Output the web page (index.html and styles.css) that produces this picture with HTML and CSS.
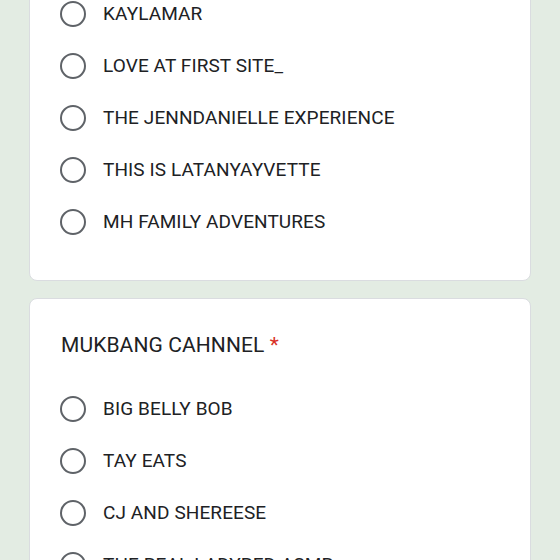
FILE: index.html
```html
<!DOCTYPE html>
<html>
<head>
<meta charset="utf-8">
<link rel="stylesheet" href="styles.css">
</head>
<body>
<div class="page">
  <div class="card card-first">
    <div class="options">
      <div class="option"><span class="radio"></span><span class="label">KAYLAMAR</span></div>
      <div class="option"><span class="radio"></span><span class="label">LOVE AT FIRST SITE_</span></div>
      <div class="option"><span class="radio"></span><span class="label">THE JENNDANIELLE EXPERIENCE</span></div>
      <div class="option"><span class="radio"></span><span class="label">THIS IS LATANYAYVETTE</span></div>
      <div class="option"><span class="radio"></span><span class="label">MH FAMILY ADVENTURES</span></div>
    </div>
  </div>
  <div class="card card-second">
    <div class="title">MUKBANG CAHNNEL <span class="req">*</span></div>
    <div class="options">
      <div class="option"><span class="radio"></span><span class="label">BIG BELLY BOB</span></div>
      <div class="option"><span class="radio"></span><span class="label">TAY EATS</span></div>
      <div class="option"><span class="radio"></span><span class="label">CJ AND SHEREESE</span></div>
      <div class="option"><span class="radio"></span><span class="label">THE REAL LADYRED ASMR</span></div>
    </div>
  </div>
</div>
</body>
</html>
```
FILE: styles.css
```css
html, body {
  margin: 0;
  padding: 0;
  background: #e3ece3;
  overflow: hidden;
}
.page {
  width: 560px;
  height: 560px;
  overflow: hidden;
  padding: 0 29px;
  box-sizing: border-box;
  font-family: Roboto, "Liberation Sans", sans-serif;
  color: #202124;
}
.card {
  background: #fff;
  border: 1px solid #dadce0;
  border-radius: 8px;
  padding-left: 31px;
  padding-right: 24px;
}
.card-first {
  margin-top: -24px;
  padding-top: 25px;
  padding-bottom: 46px;
}
.card-second {
  margin-top: 17px;
  padding-top: 34px;
  padding-bottom: 40px;
}
.title {
  font-size: 21px;
  line-height: 24px;
  letter-spacing: 0.1px;
  margin-bottom: 40px;
}
.req {
  color: #d93025;
}
.options {
  display: flex;
  flex-direction: column;
  gap: 28px;
}
.option {
  display: flex;
  align-items: center;
  height: 24px;
}
.radio {
  box-sizing: border-box;
  width: 26px;
  height: 26px;
  border: 2.5px solid #5f6368;
  border-radius: 50%;
  flex: none;
  margin-left: -1px;
  margin-right: 17px;
}
.label {
  font-size: 19px;
  line-height: 24px;
  letter-spacing: 0.1px;
}
```
